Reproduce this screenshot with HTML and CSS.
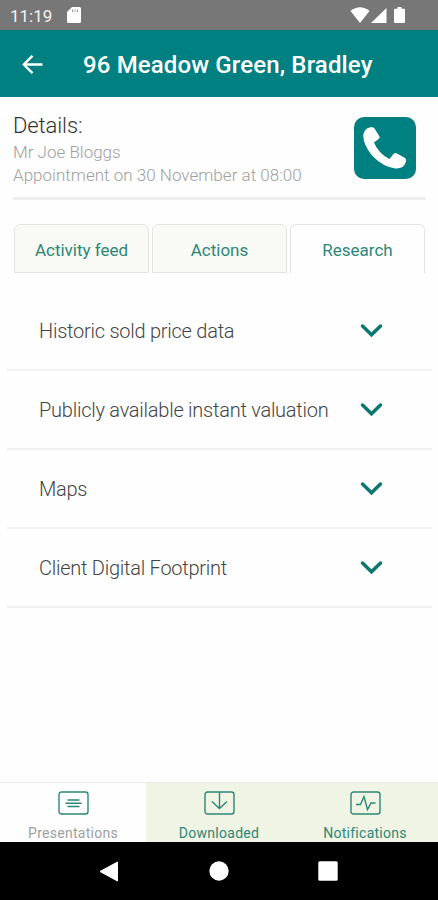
FILE: index.html
```html
<!DOCTYPE html>
<html lang="en">
<head>
<meta charset="utf-8">
<title>96 Meadow Green, Bradley</title>
<link rel="stylesheet" href="styles.css">
</head>
<body>
<div class="status">
  <span class="clock">11:19</span>
  <svg class="sd" width="14" height="16" viewBox="0 0 14 16"><path d="M5 0h7.500q1.500 0 1.500 1.500v13q0 1.500-1.500 1.500h-11Q0 16 0 14.500V5z" fill="#fff"/><path d="M5.500 2.500v2.500M8 2.500v2.500M10.500 2.500v2.500" stroke="#999" stroke-width="1"/></svg>
  <svg class="signals" width="56" height="17" viewBox="0 0 56 17" fill="#fff"><path d="M.5 4Q10-3.500 19.500 4L10 16z"/><path d="M36.500 1v15H21z"/><path d="M47.500 0h4v1.700H54q1 0 1 1V15q0 1-1 1h-9q-1 0-1-1V2.700q0-1 1-1h2.500z"/></svg>
</div>
<header class="header">
  <svg class="back" width="22" height="20" viewBox="0 0 22 20" fill="none" stroke="#fff" stroke-width="2.400"><path d="M20.500 9.500H1.500M10.500.8 1.800 9.500l8.700 8.700"/></svg>
  <h1 class="title">96 Meadow Green, Bradley</h1>
</header>
<main class="main">
  <section class="details">
    <div>
      <h2 class="label">Details:</h2>
      <p class="name">Mr Joe Bloggs</p>
      <p class="appointment">Appointment on 30 November at 08:00</p>
    </div>
    <div class="call">
      <svg width="62" height="62" viewBox="0 0 62 62"><path d="M13 11.500Q18.500 8.500 20.500 11.500L25.500 19.500Q26 21 24.500 22L20 25.500Q24 36 35.500 42L39.500 37Q41 35.500 42.500 36.300L51 41Q52.500 42 52 44.500Q50 52 41.500 51.500Q29 50 18 38.500Q9.500 28 9.300 19Q9.500 14 13 11.500Z" fill="#fff"/></svg>
    </div>
  </section>
  <nav class="tabs">
    <div class="tab">Activity feed</div>
    <div class="tab">Actions</div>
    <div class="tab active">Research</div>
  </nav>
  <section class="list">
    <div class="row"><span>Historic sold price data</span><svg class="chevron" viewBox="0 0 24 16"><path d="m2.500 3 9 8.700 9-8.700"/></svg></div>
    <div class="row"><span>Publicly available instant valuation</span><svg class="chevron" viewBox="0 0 24 16"><path d="m2.500 3 9 8.700 9-8.700"/></svg></div>
    <div class="row"><span>Maps</span><svg class="chevron" viewBox="0 0 24 16"><path d="m2.500 3 9 8.700 9-8.700"/></svg></div>
    <div class="row"><span>Client Digital Footprint</span><svg class="chevron" viewBox="0 0 24 16"><path d="m2.500 3 9 8.700 9-8.700"/></svg></div>
  </section>
</main>
<nav class="bottom">
  <div class="item current">
    <svg class="icon" viewBox="0 0 31 24"><rect x="1" y="1" width="29" height="22" rx="2.500"/><path d="M9.500 9h12M7.500 12.300h16M9.500 15.500h12"/></svg>
    <span>Presentations</span>
  </div>
  <div class="item">
    <svg class="icon" viewBox="0 0 31 24"><rect x="1" y="1" width="29" height="22" rx="2.500"/><path d="M15.500 1v16.500M8 10.500l7.500 7 7.500-7"/></svg>
    <span>Downloaded</span>
  </div>
  <div class="item">
    <svg class="icon" viewBox="0 0 31 24"><rect x="1" y="1" width="29" height="22" rx="2.500"/><path d="M6 13.500h4.500L14 5.500l3.500 13 3.500-6.500h4.500"/></svg>
    <span>Notifications</span>
  </div>
</nav>
<div class="system">
  <svg width="20" height="21" viewBox="0 0 20 21"><path d="M18.500 1v19L1 10.500z" fill="#fff" stroke="#fff" stroke-linejoin="round"/></svg>
  <svg width="20" height="20" viewBox="0 0 20 20"><circle cx="10" cy="10" r="9.700" fill="#fff"/></svg>
  <svg width="20" height="20" viewBox="0 0 20 20"><rect x=".3" y=".3" width="19.400" height="19.400" rx="1.500" fill="#fff"/></svg>
</div>
</body>
</html>
```
FILE: styles.css
```css
* { box-sizing: border-box; }
body { margin: 0; width: 438px; height: 900px; display: flex; flex-direction: column; overflow: hidden; background: #fefefe; font-family: Roboto, "Liberation Sans", sans-serif; }
svg { display: block; flex: none; }
h1, h2, p { margin: 0; white-space: nowrap; }
.status { height: 30px; flex: none; background: #777; display: flex; align-items: center; padding: 0 32px 0 10px; color: #f4f4f4; }
.clock { width: 57px; font-size: 17px; padding-top: 1px; }
.signals { margin-left: auto; }
.header { height: 67px; flex: none; background: #008080; display: flex; align-items: center; padding: 2px 0 0 22px; color: #fff; }
.title { margin-left: 39px; font-size: 24px; font-weight: 500; line-height: 30px; letter-spacing: .14px; padding-top: 1px; }
.main { flex: 1; }
.details { height: 103px; margin: 0 12px 0 13px; border-bottom: 3px solid #eee; display: flex; justify-content: space-between; padding-top: 15px; font-weight: 300; }
.label { font-size: 22px; font-weight: 300; line-height: 28px; letter-spacing: -.1px; color: #333; }
.name, .appointment { font-size: 17px; line-height: 23px; color: #a0a0a0; }
.name { line-height: 24px; }
.appointment { letter-spacing: .02px; }
.call { width: 62px; height: 62px; margin: 5px 10px 0 0; border-radius: 10px; background: #008080; }
.tabs { display: flex; gap: 3px; margin: 24px 13px 0 14px; height: 49px; }
.tab { flex: 1; border: 1px solid #e4e5e3; border-radius: 6px 6px 0 0; background: #f9faf5; color: #2c8677; font-size: 17px; line-height: 20px; text-align: center; padding-top: 15px; }
.tab.active { background: #fefefe; border-bottom: 0; }
.list { margin: 19px 6px 0 7px; }
.row { height: 79px; border-bottom: 2px solid #f2f2f2; display: flex; align-items: center; justify-content: space-between; padding: 1px 48px 0 32px; font-size: 20px; font-weight: 300; letter-spacing: -.25px; color: #444; white-space: nowrap; }
.chevron { width: 24px; height: 16px; fill: none; stroke: #0a7871; stroke-width: 3.500; stroke-linecap: round; }
.bottom { height: 60px; flex: none; display: flex; border-top: 1px solid #ecede9; }
.item { flex: 1; display: flex; flex-direction: column; align-items: center; padding-top: 8px; background: #f0f4e5; color: #2c8677; font-size: 14px; letter-spacing: .27px; }
.item span { line-height: 18px; margin-top: 9px; }
.item.current { background: #fefefe; color: #a0a0a0; }
.icon { width: 31px; height: 24px; fill: none; stroke: #2c8677; stroke-width: 1.400; }
.system { height: 58px; flex: none; background: #000; display: flex; align-items: center; justify-content: space-between; padding: 0 100px 0 99px; }
```
